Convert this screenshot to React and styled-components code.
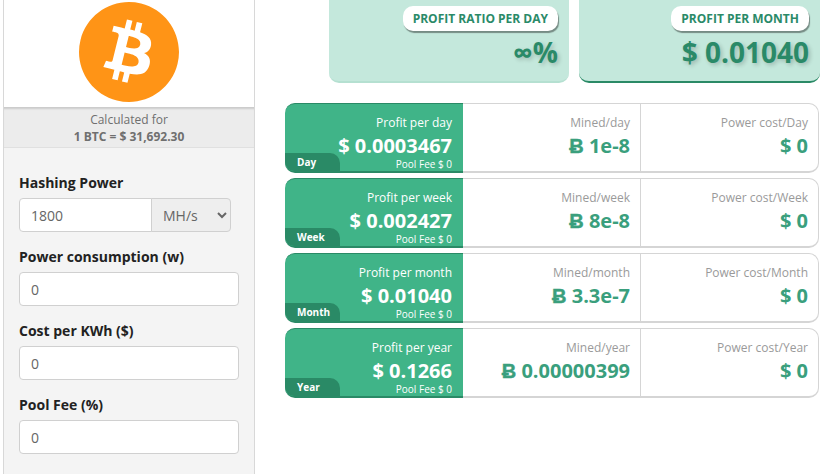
import styled, {createGlobalStyle} from 'styled-components'

const GlobalStyle = createGlobalStyle`
  html, body {
    margin: 0;
    background: #fff;
    font-family: "Open Sans", "Liberation Sans", sans-serif;
  }
  * {
    box-sizing: border-box;
  }
`;

const Page = styled.div`
  display: flex;
  width: 822px;
  height: 474px;
  overflow: hidden;
`;

const Sidebar = styled.aside`
  flex: none;
  width: 252px;
  margin-left: 3px;
  background: #f4f4f4;
  border-left: 1px solid #d8d8d8;
  border-right: 1px solid #d8d8d8;
`;

const LogoBox = styled.div`
  height: 107px;
  padding-top: 2px;
  background: #fff;
  display: flex;
  justify-content: center;
`;

const PriceBand = styled.div`
  height: 41px;
  padding-top: 4px;
  background: #ececec;
  border-bottom: 1px solid #e0e0e0;
  box-shadow: inset 0 3px 2px -1px rgba(0,0,0,0.14);
  text-align: center;
  color: #6f6f6f;
  font-size: 12px;
  line-height: 17px;

  b {
    display: block;
    font-weight: 700;
  }
`;

const Form = styled.div`
  padding: 25px 15px 0 15px;
  display: flex;
  flex-direction: column;
  gap: 15px;
`;

const Field = styled.div`
  display: flex;
  flex-direction: column;
  gap: 5px;
`;

const Label = styled.label`
  font-size: 14px;
  line-height: 20px;
  font-weight: 700;
  color: #222;
`;

const InputGroup = styled.div`
  display: flex;
  width: 212px;
`;

const Input = styled.input`
  width: 100%;
  height: 34px;
  padding: 0 11px;
  background: #fff;
  border: 1px solid #d0d0d0;
  border-radius: ${props => props.$joined ? `4px 0 0 4px` : `4px`};
  color: #666;
  font-family: inherit;
  font-size: 14px;
  outline: none;
`;

const Select = styled.select`
  flex: none;
  width: 80px;
  height: 34px;
  margin-left: -1px;
  padding: 0 2px 0 7px;
  background: #eee;
  border: 1px solid #d0d0d0;
  border-radius: 0 4px 4px 0;
  color: #666;
  font-family: inherit;
  font-size: 14px;
  outline: none;
`;

const Main = styled.main`
  flex: 1;
  min-width: 0;
  padding: 0 2px 0 30px;
`;

const TopCards = styled.div`
  display: flex;
  justify-content: flex-end;
  gap: 10px;
  height: 83px;
  margin-bottom: 20px;
`;

const TopCard = styled.div`
  width: ${props => props.$width}px;
  height: 83px;
  padding: 6px 11px 0 0;
  background: #c4e8dc;
  border-bottom: 2px solid ${props => props.$active ? `#2a8a66` : `#b5e0d1`};
  border-radius: 0 0 10px 10px;
  display: flex;
  flex-direction: column;
  align-items: flex-end;
`;

const Badge = styled.div`
  height: 25px;
  padding: 0 10px;
  background: #fff;
  border-radius: 10px;
  box-shadow: 1px 2px 1px rgba(0,0,0,0.4);
  color: #2a8a68;
  font-size: 12px;
  font-weight: 700;
  line-height: 25px;
  text-transform: uppercase;
`;

const BigValue = styled.div`
  margin-top: 2px;
  color: #2a8a68;
  font-size: 28px;
  font-weight: 700;
  line-height: 38px;
  text-shadow: 2px 2px 4px rgba(0,0,0,0.2);
`;

const Rows = styled.div`
  display: flex;
  flex-direction: column;
  gap: 5px;
  margin-right: 1px;
`;

const Row = styled.div`
  display: grid;
  grid-template-columns: 178px 178px 1fr;
  height: 70px;
`;

const ProfitCell = styled.div`
  position: relative;
  padding: 9px 11px 0 0;
  background: #40b488;
  border-top: 1px solid #2a8a66;
  border-bottom: 2px solid #2a8a66;
  border-radius: 10px 0 0 10px;
  color: #fff;
  text-align: right;
`;

const Period = styled.span`
  position: absolute;
  left: 0;
  bottom: 0;
  width: 55px;
  height: 18px;
  padding-left: 12px;
  background: #2a8a66;
  border-radius: 0 10px 0 9px;
  font-size: 10px;
  font-weight: 700;
  line-height: 18px;
  text-align: left;
`;

const CellTitle = styled.div`
  font-size: 12px;
  line-height: 20px;
  color: ${props => props.$muted ? `#9a9a9a` : `#fff`};
`;

const CellValue = styled.div`
  margin-top: 1px;
  font-size: 20px;
  font-weight: 700;
  line-height: 24px;
  color: ${props => props.$green ? `#3a9f7d` : `#fff`};
`;

const Coin = styled.span`
  -webkit-text-stroke: 0.4px currentColor;
`;

const PoolFee = styled.div`
  font-size: 10px;
  line-height: 12px;
`;

const StatCell = styled.div`
  padding: 9px 10px 0 0;
  background: #fff;
  border-top: 1px solid #d5d5d5;
  border-bottom: 2px solid #d5d5d5;
  border-right: 1px solid #d5d5d5;
  border-radius: ${props => props.$last ? `0 10px 10px 0` : `0`};
  text-align: right;
`;

const rows = [
  {period: 'Day', unit: 'day', profit: '0.0003467', mined: '1e-8'},
  {period: 'Week', unit: 'week', profit: '0.002427', mined: '8e-8'},
  {period: 'Month', unit: 'month', profit: '0.01040', mined: '3.3e-7'},
  {period: 'Year', unit: 'year', profit: '0.1266', mined: '0.00000399'},
]

const BitcoinLogo = () => (
  <svg width="100" height="100" viewBox="0 0 4091.27 4091.73">
    <path fill="#FF9416" d="M4030.06 2540.77c-273.24,1096.01 -1383.32,1763.02 -2479.46,1489.71 -1095.68,-273.24 -1762.69,-1383.39 -1489.33,-2479.31 273.12,-1096.13 1383.2,-1763.19 2479,-1489.95 1096.06,273.24 1763.03,1383.51 1489.76,2479.57l0.02 -0.02z"/>
    <path fill="#fff" d="M2947.77 1754.38c40.72,-272.26 -166.56,-418.61 -450,-516.24l91.95 -368.8 -224.5 -55.94 -89.51 359.09c-59.02,-14.72 -119.63,-28.59 -179.87,-42.34l90.16 -361.46 -224.36 -55.94 -92 368.68c-48.84,-11.12 -96.81,-22.11 -143.35,-33.69l0.26 -1.16 -309.59 -77.31 -59.72 239.78c0,0 166.56,38.18 163.05,40.53 90.91,22.69 107.35,82.87 104.62,130.57l-104.74 420.15c6.26,1.59 14.38,3.89 23.34,7.49 -7.49,-1.86 -15.46,-3.89 -23.73,-5.87l-146.81 588.57c-11.11,27.62 -39.31,69.07 -102.87,53.33 2.25,3.26 -163.17,-40.72 -163.17,-40.72l-111.46 256.98 292.15 72.83c54.35,13.63 107.61,27.89 160.06,41.3l-92.9 373.03 224.24 55.94 92 -369.07c61.26,16.63 120.71,31.97 178.91,46.43l-91.69 367.33 224.51 55.94 92.89 -372.33c382.82,72.45 670.67,43.24 791.83,-303.02 97.63,-278.78 -4.86,-439.58 -206.26,-544.44 146.69,-33.83 257.18,-130.31 286.64,-329.61l-0.07 -0.05zm-512.93 719.26c-69.38,278.78 -538.76,128.08 -690.94,90.29l123.28 -494.2c152.17,37.99 640.17,113.17 567.67,403.91zm69.43 -723.3c-63.29,253.58 -453.96,124.75 -580.69,93.16l111.77 -448.21c126.73,31.59 534.85,90.55 468.94,355.05l-0.02 0z"/>
  </svg>
)

const App = () => (
  <Page>
    <GlobalStyle />
    <Sidebar>
      <LogoBox><BitcoinLogo /></LogoBox>
      <PriceBand>
        Calculated for
        <b>1 BTC = $ 31,692.30</b>
      </PriceBand>
      <Form>
        <Field>
          <Label>Hashing Power</Label>
          <InputGroup>
            <Input $joined defaultValue="1800" />
            <Select defaultValue="MH/s">
              <option>MH/s</option>
              <option>GH/s</option>
            </Select>
          </InputGroup>
        </Field>
        <Field>
          <Label>Power consumption (w)</Label>
          <Input defaultValue="0" />
        </Field>
        <Field>
          <Label>Cost per KWh ($)</Label>
          <Input defaultValue="0" />
        </Field>
        <Field>
          <Label>Pool Fee (%)</Label>
          <Input defaultValue="0" />
        </Field>
      </Form>
    </Sidebar>
    <Main>
      <TopCards>
        <TopCard $width={240}>
          <Badge>Profit ratio per day</Badge>
          <BigValue>∞%</BigValue>
        </TopCard>
        <TopCard $width={241} $active>
          <Badge>Profit per month</Badge>
          <BigValue>$ 0.01040</BigValue>
        </TopCard>
      </TopCards>
      <Rows>
        {rows.map((row) => (
          <Row key={row.period}>
            <ProfitCell>
              <CellTitle>Profit per {row.unit}</CellTitle>
              <CellValue>$ {row.profit}</CellValue>
              <PoolFee>Pool Fee $ 0</PoolFee>
              <Period>{row.period}</Period>
            </ProfitCell>
            <StatCell>
              <CellTitle $muted>Mined/{row.unit}</CellTitle>
              <CellValue $green><Coin>Ƀ</Coin> {row.mined}</CellValue>
            </StatCell>
            <StatCell $last>
              <CellTitle $muted>Power cost/{row.period}</CellTitle>
              <CellValue $green>$ 0</CellValue>
            </StatCell>
          </Row>
        ))}
      </Rows>
    </Main>
  </Page>
)

export default App
